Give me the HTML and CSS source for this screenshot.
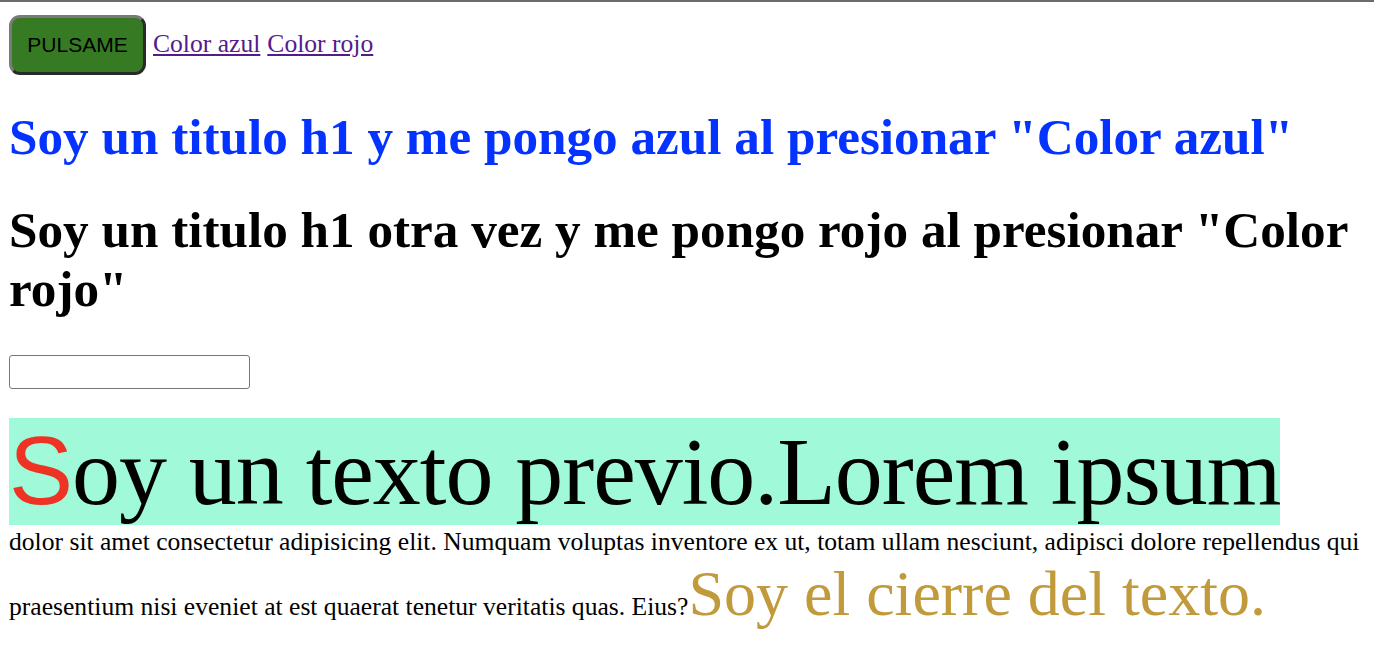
FILE: index.html
```html
<!DOCTYPE html>
<html lang="es">
<head>
<meta charset="utf-8">
<title>Práctica</title>
<link rel="stylesheet" href="styles.css">
</head>
<body>
<div class="toolbar">
  <button class="btn" type="button">PULSAME</button>
  <a class="link" href="#">Color azul</a>
  <a class="link" href="#">Color rojo</a>
</div>
<h1 class="title title-blue">Soy un titulo h1 y me pongo azul al presionar "Color azul"</h1>
<h1 class="title">Soy un titulo h1 otra vez y me pongo rojo al presionar "Color rojo"</h1>
<div class="field">
  <input class="text-input" type="text">
</div>
<p class="intro">Soy un texto previo.Lorem ipsum dolor sit amet consectetur adipisicing elit. Numquam voluptas inventore ex ut, totam ullam nesciunt, adipisci dolore repellendus qui praesentium nisi eveniet at est quaerat tenetur veritatis quas. Eius?<span class="closing">Soy el cierre del texto.</span></p>
</body>
</html>
```
FILE: styles.css
```css
html {
  border-top: 2px solid #6b6b6b;
}

body {
  margin: 13px 9px 0;
  font-family: "Liberation Serif", "Times New Roman", serif;
  font-size: 25.6px;
  color: #000;
}

.toolbar {
  display: flex;
  align-items: baseline;
  gap: 7px;
}

.btn {
  font-family: "Liberation Sans", Arial, sans-serif;
  font-size: 21px;
  color: #000;
  background: #367b23;
  border: 3px solid;
  border-color: #7a7a7a #2a2a2a #2a2a2a #7a7a7a;
  border-radius: 11px;
  padding: 15px 15px;
  line-height: 24px;
  width: 137px;
  height: 60px;
  box-sizing: border-box;
}

.link {
  color: #551a8b;
}

.title {
  font-size: 51.2px;
  margin: 0.67em 0;
}

.title-blue {
  color: #0433ff;
  margin-top: 32px;
}

.field {
  padding-top: 2px;
}

.text-input {
  display: block;
  width: 241px;
  height: 34px;
  box-sizing: border-box;
  border: 1px solid #767676;
  border-radius: 3px;
  margin: 0;
}

.intro {
  margin: 27px 0 0;
}

.intro::first-line {
  font-size: 96px;
  letter-spacing: -1.05px;
  background: #a0f9d8;
}

.intro::first-letter {
  font-family: "Liberation Sans", Arial, sans-serif;
  color: #ee3224;
}

.closing {
  font-size: 64px;
  color: #c19a3c;
}
```
